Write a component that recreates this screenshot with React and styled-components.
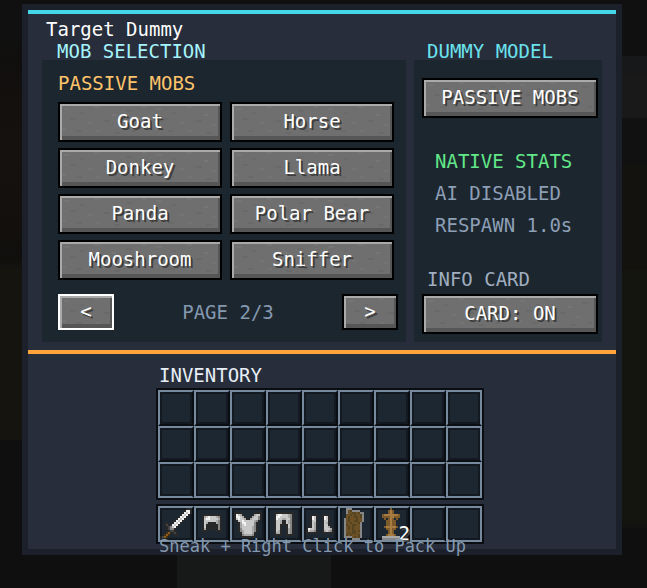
import React, { useState } from 'react';
import styled, { createGlobalStyle, css } from 'styled-components';

const GlobalStyle = createGlobalStyle`
  * { box-sizing: border-box; }
  body {
    margin: 0;
    background: #0f0f0f;
    font-family: "DejaVu Sans Mono", monospace;
    font-size: 19px;
    line-height: 18px;
    color: #fff;
  }
`;

// stone grain of the buttons
const grain = [
  [4, 4, 6, '#757575'], [20, 8, 4, '#6a6a6a'], [34, 2, 6, '#747474'], [52, 10, 4, '#767676'],
  [66, 6, 6, '#6a6a6a'], [82, 2, 4, '#747474'], [10, 14, 6, '#6a6a6a'], [28, 18, 4, '#757575'],
  [44, 16, 6, '#696969'], [60, 20, 4, '#747474'], [78, 14, 6, '#757575'], [2, 24, 4, '#747474'],
  [16, 26, 6, '#6a6a6a'], [36, 26, 4, '#747474'], [54, 28, 6, '#6a6a6a'], [72, 26, 4, '#696969'],
]
  .map(([x, y, w, c]) => `<rect x='${x}' y='${y}' width='${w}' height='2' fill='${c}'/>`)
  .join('');
const stone = `data:image/svg+xml,${encodeURIComponent(
  `<svg xmlns='http://www.w3.org/2000/svg' width='92' height='32'>${grain}</svg>`
)}`;

const Page = styled.div`
  min-height: 100vh;
  padding: 4px 25px 33px 22px;
  overflow: hidden;
  background:
    linear-gradient(#171818, #171818) 177px 100% / 154px 33px no-repeat,
    linear-gradient(#101010 0 34px, #110f0e 60px, #15110e 150px, #110f0d 260px, #15140f 270px 440px, #0f0f0f 440px)
      0 0 / 22px 100% no-repeat,
    linear-gradient(#101010 0 56px, #17181a 56px 74px, #191919 74px 118px, #111 118px 165px, #13120f 165px 270px, #15150f 270px 520px, #0f0f0f 530px)
      100% 0 / 25px 100% no-repeat,
    #0f0f0f;
`;
const Window = styled.main`
  border: 6px solid #1c202b;
  background: #272d3b;
`;
const Top = styled.div`
  border-top: 4px solid #43d7e7;
  padding: 6px 14px 8px;
`;
const Title = styled.h1`
  margin: 0 0 4px 4px;
  font: inherit;
`;
const Columns = styled.div`
  display: grid;
  grid-template-columns: 364fr 188fr;
  gap: 8px;
`;
const Column = styled.section`
  display: flex;
  flex-direction: column;
  min-width: 0;
`;
const Heading = styled.h2`
  margin: 0 0 0 ${({ $inset }) => $inset || 0}px;
  font: inherit;
  color: ${({ $color }) => $color};
`;
const Box = styled.div`
  flex: 1;
  background: #1c262f;
  padding: ${({ $pad }) => $pad};
`;
const MobGrid = styled.div`
  display: grid;
  grid-template-columns: 1fr 1fr;
  gap: 6px 8px;
  margin: 10px 4px 14px 0;
`;
const Button = styled.button`
  width: ${({ $small }) => ($small ? '56px' : '100%')};
  height: ${({ $small }) => ($small ? '36px' : '40px')};
  padding: 0 0 2px;
  border: 2px solid #000;
  font: inherit;
  color: #fff;
  text-shadow: 2px 2px #3c3c3c;
  white-space: nowrap;
  cursor: pointer;
  background: #6f6f6f url("${stone}");
  box-shadow: inset 2px 2px #aaa, inset -2px -4px #565656;
  ${({ $selected }) =>
    $selected &&
    css`
      border-color: #fff;
    `}
`;
const Pager = styled.nav`
  display: flex;
  justify-content: space-between;
  align-items: center;
`;
const PageLabel = styled.span`
  color: #8499b0;
  text-shadow: 2px 2px #20272e;
`;
const Stats = styled.div`
  display: flex;
  flex-direction: column;
  gap: 14px;
  margin: 34px 0 36px 13px;
`;
const Stat = styled.div`
  color: ${({ $on }) => ($on ? '#62e888' : '#8d9fb5')};
`;
const CardLabel = styled.div`
  margin: 0 0 6px 5px;
  color: #a0aebf;
`;
const Inventory = styled.section`
  border-top: 4px solid #ffa33a;
  padding: 12px 4px 5px 0;
  display: flex;
  flex-direction: column;
  align-items: center;
`;
const Stash = styled.div`
  position: relative;
  display: flex;
  flex-direction: column;
  gap: 4px;
`;
const Slots = styled.div`
  display: grid;
  grid-template-columns: repeat(9, 36px);
  border: 2px solid #0a0e13;
`;
const Slot = styled.div`
  position: relative;
  height: 36px;
  border: 2px solid #0a0e13;
  border-top-color: #76899d;
  border-left-color: #76899d;
  background: #1d2732;
  box-shadow: inset 0 0 0 2px #121920;
  &:nth-child(9n) { border-right-color: #76899d; }
  &:nth-last-child(-n + 9) { border-bottom-color: #76899d; }
  svg { display: block; }
`;
const Count = styled.span`
  position: absolute;
  right: -2px;
  bottom: -2px;
  text-shadow: 2px 2px #3e3e3e;
`;
const Hint = styled.div`
  position: absolute;
  left: 3px;
  bottom: -11px;
  font-size: 17px;
  white-space: nowrap;
  color: #8499b0;
`;

const PALETTE = {
  k: '#282828', d: '#444444', g: '#868686', m: '#a8a8a8', l: '#c8c8c8', w: '#f2f2f2',
  b: '#4a3010', o: '#8a5c1c', t: '#6c5026', n: '#56431f', y: '#a67c42', z: '#7d5a2a',
};

const SPRITES = {
  sword: [
    '.............kkk',
    '............kwwk',
    '...........kwlwk',
    '..........kwlwk.',
    '.........kwlwk..',
    '........kwlwk...',
    '.......kwlwk....',
    '..kk..kwlwk.....',
    '..kdkkwlwk......',
    '...kdglwk.......',
    '...kdggk........',
    '....kddk........',
    '...bokkdk.......',
    '..bob..kk.......',
    'kdob............',
    'kkk.............',
  ],
  helmet: [
    '', '', '',
    '....kkkkkkkk....',
    '...kmlwlllmgk...',
    '...klwwllllmk...',
    '...kllllllmgk...',
    '...klmkkkkmgk...',
    '...klkkkkkkgk...',
    '...klkkkkkkgk...',
    '...kmkkkkkkgk...',
    '...kkk....kkk...',
  ],
  chest: [
    '', '',
    '.kkkk......kkkk.',
    '.kwlmk....kmllk.',
    '.kwwlmk..kmllgk.',
    '.klwllmkkmlllgk.',
    '..kllwlllllmgk..',
    '...kmwwllllgk...',
    '...kmlwllllgk...',
    '...kmlllllmgk...',
    '...kglllllmgk...',
    '...kgmllllmgk...',
    '....kmllllmk....',
    '....kgmmmmgk....',
    '.....kkkkkk.....',
  ],
  legs: [
    '', '',
    '...kkkkkkkkkk...',
    '...klwwlllmgk...',
    '...kwwllllmgk...',
    '...kwllmmllgk...',
    '...kllmkklmgk...',
    '...kllmkklmgk...',
    '...kllkkkklgk...',
    '...kllk..klgk...',
    '...kllk..kmgk...',
    '...klmk..kmgk...',
    '...kmmk..kmgk...',
    '...kkkk..kkkk...',
  ],
  boots: [
    '', '', '',
    '...kkkk..kkkk...',
    '...kwlk..kwlk...',
    '...kwlk..kwlk...',
    '...kllk..kllk...',
    '...klmk..klmk...',
    '...klmk..kllk...',
    '..kklmk..kllmk..',
    '.kwllmk..klllmk.',
    '.klmmgk..kmlmgk.',
    '.kkkkkk..kkkkkk.',
  ],
  shield: [
    '...ggg..........',
    '...gtngggg......',
    '...gttnntngg....',
    '...ttntnttng....',
    '...tnttnntng....',
    '..gtntttnttg....',
    '..gtnttnnttg....',
    '..gttntttng.....',
    '..gnttnnttg.....',
    '..gtntntttg.....',
    '..gtntntttg.....',
    '..gtttnntng.....',
    '..gtntnnttg.....',
    '..gntntttng.....',
    '..ggggtntng.....',
    '......gggg......',
  ],
  stand: [
    '.......z........',
    '......zyz.......',
    '......zyz.......',
    '...zyyyyyyyz....',
    '...zzzzyyzzz....',
    '....z.zyz.z.....',
    '.....zzyzz......',
    '.....zzyzz......',
    '.....zzyzz......',
    '....zyyyyyz.....',
    '.....zzyzz......',
    '......zyz.......',
    '......zyz.......',
    '.....zyyyz......',
    '...mmmmmmmmm....',
    '...ggggggggg....',
  ],
};

const Sprite = ({ name }) => (
  <svg width="32" height="32" viewBox="0 0 16 16" shapeRendering="crispEdges" role="img" aria-label={name}>
    {SPRITES[name].map((row, y) =>
      [...row].map((c, x) =>
        c === '.' ? null : <rect key={`${x}-${y}`} x={x} y={y} width="1" height="1" fill={PALETTE[c]} />
      )
    )}
  </svg>
);

const mobs = ['Goat', 'Horse', 'Donkey', 'Llama', 'Panda', 'Polar Bear', 'Mooshroom', 'Sniffer'];
const hotbar = ['sword', 'helmet', 'chest', 'legs', 'boots', 'shield', 'stand', null, null];

const App = () => {
  const [page, setPage] = useState(2);
  const [card, setCard] = useState(true);

  return (
    <Page>
      <GlobalStyle />
      <Window>
        <Top>
          <Title>Target Dummy</Title>
          <Columns>
            <Column>
              <Heading $color="#a5f3fc" $inset={15}>MOB SELECTION</Heading>
              <Box $pad="14px 8px 12px 16px">
                <Heading $color="#ffc46b">PASSIVE MOBS</Heading>
                <MobGrid>
                  {mobs.map((mob) => (
                    <Button key={mob}>{mob}</Button>
                  ))}
                </MobGrid>
                <Pager>
                  <Button $small $selected onClick={() => setPage(Math.max(1, page - 1))}>&lt;</Button>
                  <PageLabel>PAGE {page}/3</PageLabel>
                  <Button $small onClick={() => setPage(Math.min(3, page + 1))}>&gt;</Button>
                </Pager>
              </Box>
            </Column>
            <Column>
              <Heading $color="#6be3ee" $inset={13}>DUMMY MODEL</Heading>
              <Box $pad="18px 4px 8px 8px">
                <Button>PASSIVE MOBS</Button>
                <Stats>
                  <Stat $on>NATIVE STATS</Stat>
                  <Stat>AI DISABLED</Stat>
                  <Stat>RESPAWN 1.0s</Stat>
                </Stats>
                <CardLabel id="card-label">INFO CARD</CardLabel>
                <Button aria-describedby="card-label" onClick={() => setCard(!card)}>
                  CARD: {card ? 'ON' : 'OFF'}
                </Button>
              </Box>
            </Column>
          </Columns>
        </Top>
        <Inventory>
          <Stash>
            <Heading $color="#e8eef6" $inset={3}>INVENTORY</Heading>
            <Slots>
              {Array.from({ length: 27 }, (_, i) => (
                <Slot key={i} />
              ))}
            </Slots>
            <Slots>
              {hotbar.map((item, i) => (
                <Slot key={i}>
                  {item && <Sprite name={item} />}
                  {item === 'stand' && <Count>2</Count>}
                </Slot>
              ))}
            </Slots>
            <Hint>Sneak + Right Click to Pack Up</Hint>
          </Stash>
        </Inventory>
      </Window>
    </Page>
  );
};

export default App;
